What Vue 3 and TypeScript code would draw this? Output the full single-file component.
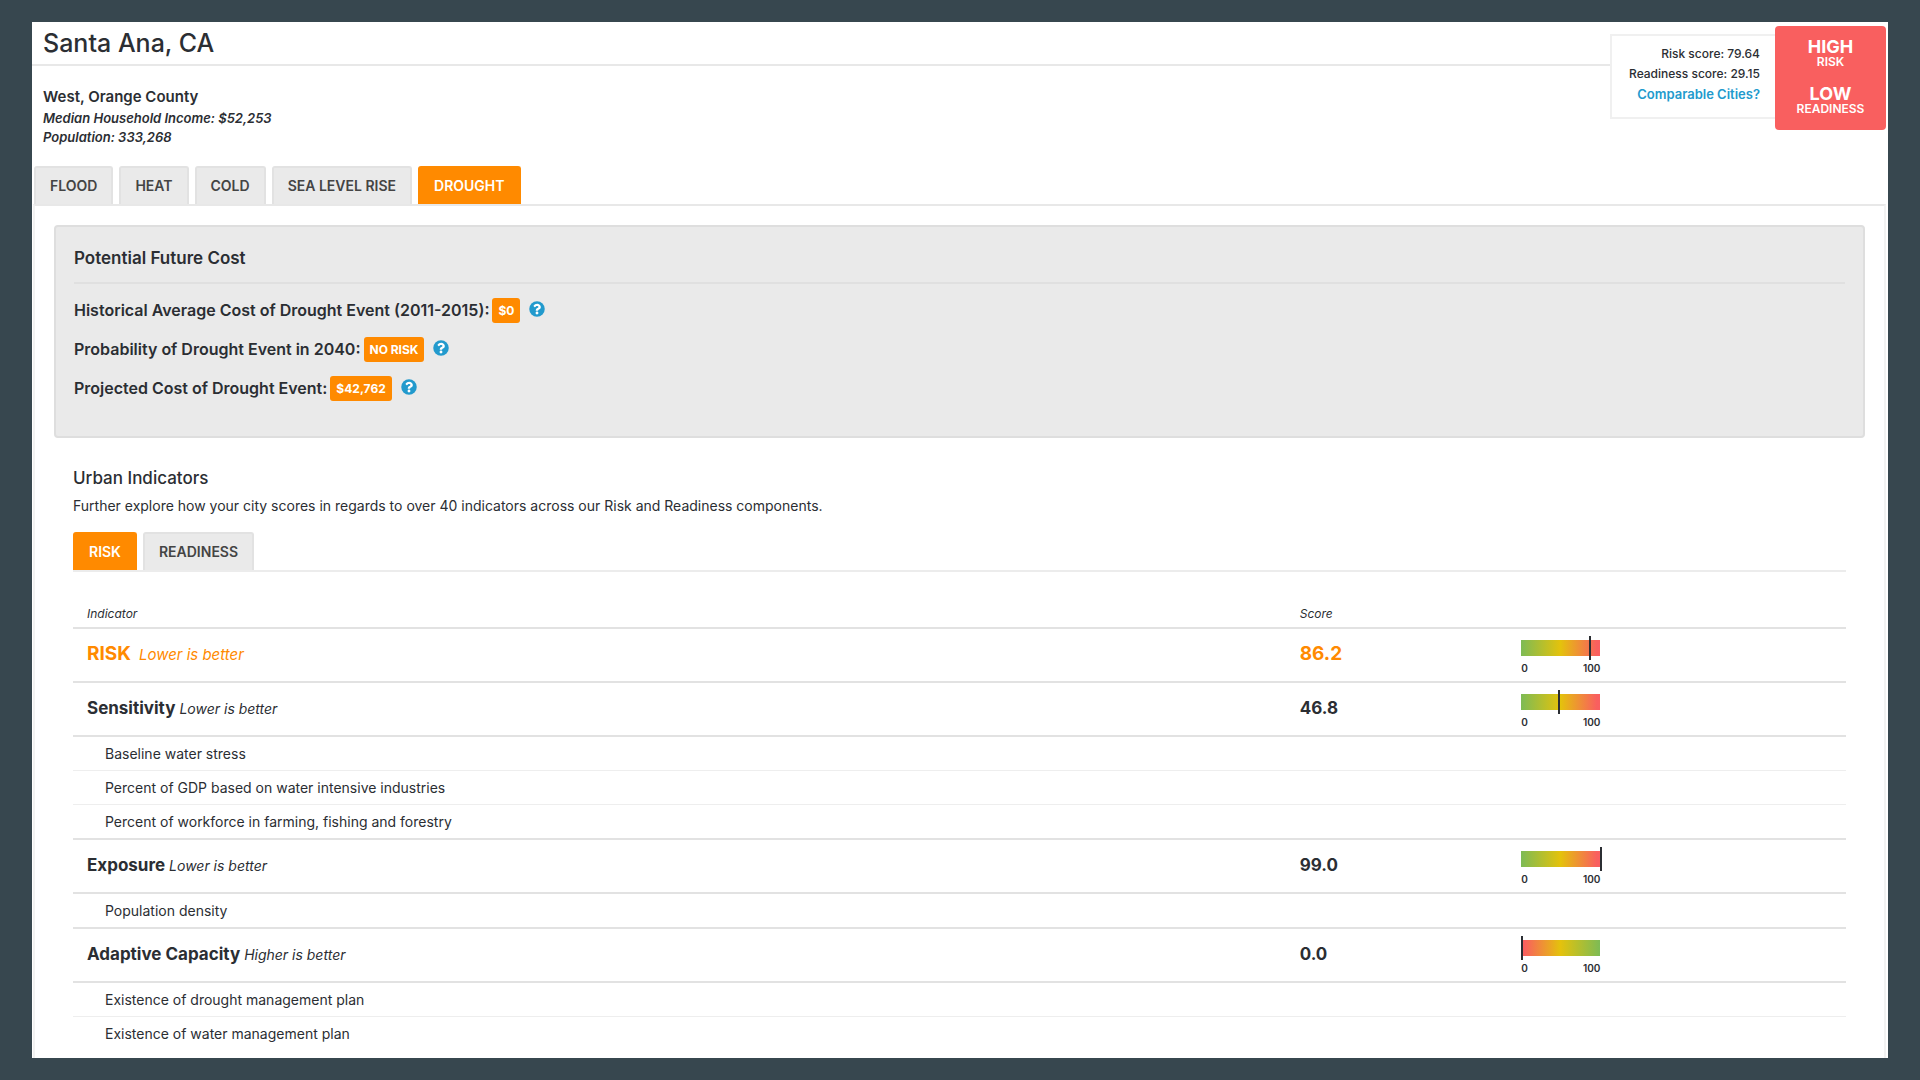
<script setup lang="ts">
import { ref } from 'vue'

interface Indicator {
  name: string
  hint?: string
  score?: number
  kind: 'total' | 'group' | 'item'
  reversed?: boolean
}

interface CostFact {
  label: string
  value: string
}

const hazards: string[] = ['Flood', 'Heat', 'Cold', 'Sea level rise', 'Drought']
const activeHazard = ref('Drought')

const components: string[] = ['Risk', 'Readiness']
const activeComponent = ref('Risk')

const costs: CostFact[] = [
  { label: 'Historical Average Cost of Drought Event (2011-2015):', value: '$0' },
  { label: 'Probability of Drought Event in 2040:', value: 'NO RISK' },
  { label: 'Projected Cost of Drought Event:', value: '$42,762' },
]

const indicators: Indicator[] = [
  { name: 'RISK', hint: 'Lower is better', score: 86.2, kind: 'total' },
  { name: 'Sensitivity', hint: 'Lower is better', score: 46.8, kind: 'group' },
  { name: 'Baseline water stress', kind: 'item' },
  { name: 'Percent of GDP based on water intensive industries', kind: 'item' },
  { name: 'Percent of workforce in farming, fishing and forestry', kind: 'item' },
  { name: 'Exposure', hint: 'Lower is better', score: 99.0, kind: 'group' },
  { name: 'Population density', kind: 'item' },
  { name: 'Adaptive Capacity', hint: 'Higher is better', score: 0.0, kind: 'group', reversed: true },
  { name: 'Existence of drought management plan', kind: 'item' },
  { name: 'Existence of water management plan', kind: 'item' },
]

// A heavier rule separates an item from the group that follows it.
function endsGroup(index: number): boolean {
  const next = indicators[index + 1]
  return next !== undefined && next.kind !== 'item'
}
</script>

<template>
  <div class="page">
    <main class="sheet">
      <header class="header">
        <div class="place">
          <h1 class="city">Santa Ana, CA</h1>
          <div class="facts">
            <p class="county">West, Orange County</p>
            <p class="fact">Median Household Income: $52,253</p>
            <p class="fact">Population: 333,268</p>
          </div>
        </div>
        <div class="scores">
          <p>Risk score: 79.64</p>
          <p>Readiness score: 29.15</p>
          <a href="#comparable">Comparable Cities?</a>
        </div>
        <div class="verdict">
          <p><strong>HIGH</strong><span>RISK</span></p>
          <p><strong>LOW</strong><span>READINESS</span></p>
        </div>
      </header>

      <nav class="tabs hazards">
        <button
          v-for="hazard in hazards"
          :key="hazard"
          type="button"
          class="tab"
          :class="{ active: hazard === activeHazard }"
          @click="activeHazard = hazard"
        >{{ hazard }}</button>
      </nav>

      <section class="panel">
        <section class="cost">
          <h2>Potential Future Cost</h2>
          <ul>
            <li v-for="cost in costs" :key="cost.label">
              <span>{{ cost.label }}</span>
              <span class="badge">{{ cost.value }}</span>
              <button type="button" class="help" aria-label="Help">
                <svg viewBox="0 0 512 512" aria-hidden="true">
                  <circle cx="256" cy="256" r="248" fill="#229acd" />
                  <path
                    fill="#ffffff"
                    d="M262.655 90c-54.497 0-89.255 22.957-116.549 63.758-3.536 5.286-2.353 12.415 2.715 16.258l34.699 26.31c5.205 3.947 12.621 3.008 16.665-2.122 17.864-22.658 30.113-35.797 57.303-35.797 20.429 0 45.698 13.148 45.698 32.958 0 14.976-12.363 22.667-32.534 33.976C247.128 238.528 216 254.941 216 296v4c0 6.627 5.373 12 12 12h56c6.627 0 12-5.373 12-12v-1.333c0-28.462 83.186-29.647 83.186-106.667 0-58.002-60.165-102-116.531-102zM256 338c-25.365 0-46 20.635-46 46 0 25.364 20.635 46 46 46s46-20.636 46-46c0-25.365-20.635-46-46-46z"
                  />
                </svg>
              </button>
            </li>
          </ul>
        </section>

        <section class="urban">
          <h2>Urban Indicators</h2>
          <p class="lead">Further explore how your city scores in regards to over 40 indicators across our Risk and Readiness components.</p>
          <nav class="tabs components">
            <button
              v-for="component in components"
              :key="component"
              type="button"
              class="tab"
              :class="{ active: component === activeComponent }"
              @click="activeComponent = component"
            >{{ component }}</button>
          </nav>

          <table class="indicators">
            <colgroup>
              <col class="col-name" />
              <col class="col-score" />
              <col />
            </colgroup>
            <thead>
              <tr>
                <th scope="col">Indicator</th>
                <th scope="col">Score</th>
                <td></td>
              </tr>
            </thead>
            <tbody>
              <tr
                v-for="(row, index) in indicators"
                :key="row.name"
                :class="[row.kind, { 'ends-group': endsGroup(index) }]"
              >
                <td><span class="name">{{ row.name }}</span><em v-if="row.hint">{{ row.hint }}</em></td>
                <td><span v-if="row.score !== undefined" class="name">{{ row.score.toFixed(1) }}</span></td>
                <td class="gauge-cell">
                  <div v-if="row.score !== undefined" class="gauge">
                    <div class="bar" :class="{ reversed: row.reversed }">
                      <span class="marker" :style="{ left: row.score + '%' }"></span>
                    </div>
                    <div class="scale"><span>0</span><span>100</span></div>
                  </div>
                </td>
              </tr>
            </tbody>
          </table>
        </section>
      </section>
    </main>
  </div>
</template>

<style>
body {
  margin: 0;
  background: #37474f;
}
</style>

<style scoped>
.page {
  box-sizing: border-box;
  min-height: 100vh;
  padding: 22px 32px;
  display: flex;
  background: #37474f;
  color: #2b2e33;
  font-family: Inter, "Liberation Sans", sans-serif;
  font-size: 14px;
}

.sheet {
  flex: 1;
  min-width: 0;
  display: flex;
  flex-direction: column;
  background: #ffffff;
}

h1,
h2,
p,
ul {
  margin: 0;
  padding: 0;
}

button {
  margin: 0;
  font-family: inherit;
  cursor: pointer;
}

.header {
  display: flex;
  align-items: flex-start;
  padding-right: 2px;
}

.place {
  flex: 1;
}

.city {
  padding-left: 11px;
  border-bottom: 2px solid #e8e8e8;
  font-size: 25px;
  font-weight: 500;
  line-height: 42px;
}

.facts {
  padding: 21px 11px 19px;
}

.county {
  margin-bottom: 2px;
  font-size: 15px;
  font-weight: 600;
  line-height: 20px;
}

.fact {
  font-size: 13px;
  font-style: italic;
  font-weight: 600;
  line-height: 19px;
}

.scores {
  margin-top: 12px;
  padding: 8px 15px 12px 17px;
  border: 2px solid #f0f0f0;
  border-right: 0;
  font-size: 12px;
  font-weight: 500;
  line-height: 20px;
  text-align: right;
}

.scores a {
  color: #229acd;
  font-size: 13px;
  font-weight: 600;
  text-decoration: none;
}

.verdict {
  box-sizing: border-box;
  width: 111px;
  height: 104px;
  margin-top: 4px;
  padding-top: 13px;
  display: flex;
  flex-direction: column;
  gap: 18px;
  border-radius: 4px;
  background: #f95f5f;
  color: #ffffff;
  text-align: center;
}

.verdict p {
  display: flex;
  flex-direction: column;
}

.verdict strong {
  font-size: 18px;
  font-weight: 700;
  line-height: 16px;
}

.verdict span {
  font-size: 12px;
  font-weight: 600;
  line-height: 13px;
}

.tabs {
  display: flex;
  gap: 6px;
}

.tab {
  height: 38px;
  padding: 0 14px 2px;
  border: 2px solid #e2e2e2;
  border-bottom: 0;
  border-radius: 3px 3px 0 0;
  background: #eaeaea;
  color: #444444;
  font-size: 14px;
  font-weight: 600;
  text-transform: uppercase;
}

.tab.active {
  border-color: #ff8a00;
  background: #ff8a00;
  color: #ffffff;
}

.hazards {
  padding-left: 2px;
}

.panel {
  flex: 1;
  margin: 0 2px 0 1px;
  padding: 19px 19px 0;
  border: 2px solid #f2f2f2;
  border-top-color: #e8e8e8;
  border-bottom: 0;
}

.cost {
  padding: 19px 18px 35px;
  border: 2px solid #dedede;
  border-radius: 4px;
  background: #eaeaea;
}

.cost h2 {
  padding-bottom: 12px;
  border-bottom: 2px solid #e0e0e0;
  font-size: 17px;
  font-weight: 600;
  line-height: 24px;
}

.cost ul {
  margin-top: 14px;
  display: flex;
  flex-direction: column;
  gap: 14px;
  list-style: none;
}

.cost li {
  display: flex;
  align-items: center;
  font-size: 16px;
  font-weight: 600;
  line-height: 25px;
}

.badge {
  margin: 0 9px 0 3px;
  padding: 0 6px;
  border-radius: 3px;
  background: #ff8a00;
  color: #ffffff;
  font-size: 12px;
  font-weight: 700;
}

.help {
  width: 16px;
  height: 16px;
  margin-bottom: 3px;
  padding: 0;
  border: 0;
  background: none;
}

.help svg {
  display: block;
}

.urban {
  padding: 28px 19px 0;
}

.urban h2 {
  font-size: 17px;
  font-weight: 500;
  line-height: 24px;
}

.lead {
  margin: 6px 0 16px;
  line-height: 20px;
}

.components {
  border-bottom: 2px solid #ececec;
}

.indicators {
  width: 100%;
  table-layout: fixed;
  border-collapse: separate;
  border-spacing: 0;
}

.col-name {
  width: 68.4%;
}

.col-score {
  width: 12.5%;
}

.indicators th,
.indicators td {
  padding: 6px 14px;
  border-bottom: 2px solid #e2e2e2;
  line-height: 21px;
  text-align: left;
}

.indicators th {
  padding-top: 31px;
  padding-bottom: 3px;
  font-size: 12px;
  font-style: italic;
  font-weight: 400;
}

.indicators .total td,
.indicators .group td {
  padding-top: 14px;
  padding-bottom: 14px;
  line-height: 24px;
}

.indicators .name,
.indicators em {
  line-height: 16px;
}

.total .name {
  font-size: 19px;
  font-weight: 700;
}

.indicators .total td {
  color: #ff8a00;
}

.total em {
  margin-left: 8px;
  font-size: 15px;
}

.group .name {
  font-size: 17px;
  font-weight: 700;
}

.group em {
  margin-left: 4px;
}

.indicators .item td {
  border-bottom: 1px solid #eeeeee;
}

.indicators .item.ends-group td {
  border-bottom: 2px solid #e2e2e2;
}

.indicators .item td:first-child {
  padding-left: 32px;
}

.indicators tbody tr:last-child td {
  border-bottom: 0;
}

.indicators tbody .gauge-cell {
  padding-top: 0;
  padding-bottom: 0;
  vertical-align: top;
}

.gauge {
  width: 79px;
  padding-top: 11px;
}

.bar {
  position: relative;
  height: 16px;
  background: linear-gradient(to right, #7dbb55, #e4c20c 50%, #f95f5f 96%);
}

.bar.reversed {
  background: linear-gradient(to left, #7dbb55, #e4c20c 50%, #f95f5f 96%);
}

.marker {
  position: absolute;
  top: -4px;
  bottom: -4px;
  width: 2px;
  background: #2b2e33;
}

.scale {
  margin-top: 6px;
  display: flex;
  justify-content: space-between;
  color: #2b2e33;
  font-size: 10px;
  font-weight: 600;
  line-height: 12px;
}
</style>
